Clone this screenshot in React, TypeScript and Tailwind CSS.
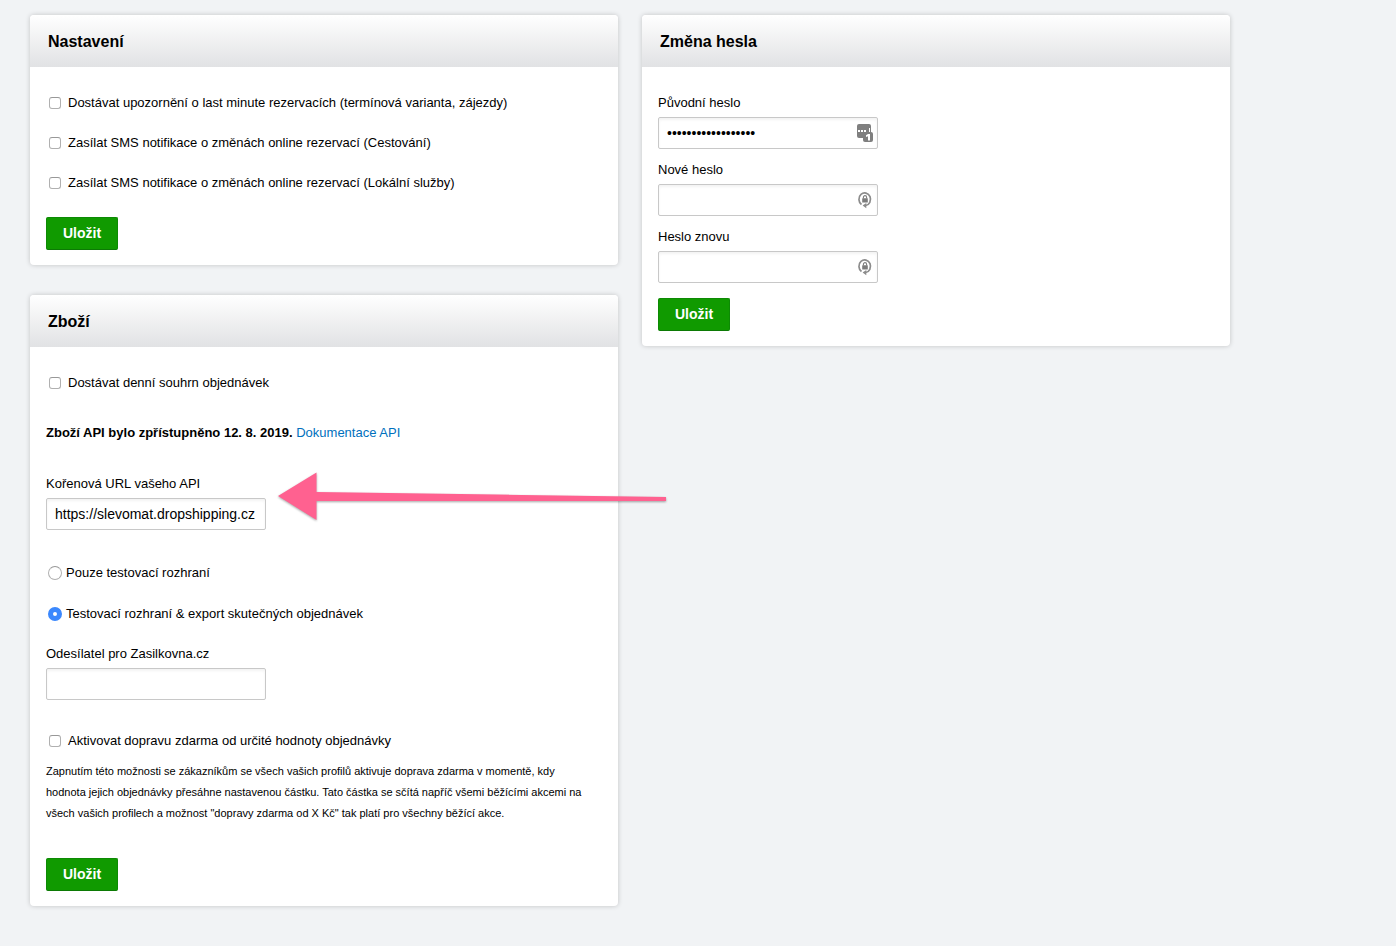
import { useId, type ReactNode } from 'react';

function Card({ title, children }: { title: string; children: ReactNode }) {
  return (
    <section className="rounded-sm bg-white shadow-[0_0_5px_rgba(0,0,0,0.2)]">
      <h2 className="rounded-t-sm bg-linear-to-b from-white to-[#e1e2e4] px-[18px] pt-[15px] pb-[13px] text-[16px] leading-6 font-bold">
        {title}
      </h2>
      <form className="px-4 pt-[26px] pb-[15px]" onSubmit={(e) => e.preventDefault()}>
        {children}
      </form>
    </section>
  );
}

function Checkbox({ label }: { label: string }) {
  return (
    <label className="flex items-center gap-[7px] pl-[3px]">
      <input
        type="checkbox"
        className="size-3 shrink-0 appearance-none rounded-[3px] border border-[#b0b0b0] border-t-[#989898] bg-white checked:border-[#3b8afd] checked:bg-[#3b8afd]"
      />
      <span>{label}</span>
    </label>
  );
}

function Radio({ label, defaultChecked }: { label: string; defaultChecked?: boolean }) {
  return (
    <label className="flex items-center gap-1 pl-[2px]">
      <input
        type="radio"
        name="api-mode"
        defaultChecked={defaultChecked}
        className="size-[14px] shrink-0 appearance-none rounded-full border border-[#b0b0b0] border-t-[#989898] bg-white checked:border-5 checked:border-[#3b88fd]"
      />
      <span>{label}</span>
    </label>
  );
}

type FieldProps = {
  label: string;
  type?: string;
  defaultValue?: string;
  icon?: ReactNode;
};

function Field({ label, type = 'text', defaultValue, icon }: FieldProps) {
  const id = useId();
  return (
    <div className="flex flex-col items-start gap-1">
      <label htmlFor={id}>{label}</label>
      <div className="relative w-[220px] max-w-full">
        <input
          id={id}
          type={type}
          defaultValue={defaultValue}
          className="block h-8 w-full rounded-[2px] border border-[#c8c8c8] bg-white px-2 text-[14px] shadow-[inset_0_2px_3px_rgba(0,0,0,0.05)] outline-none"
        />
        {icon && <span className="pointer-events-none absolute top-[6px] right-1">{icon}</span>}
      </div>
    </div>
  );
}

function SaveButton() {
  return (
    <button
      type="submit"
      className="block h-[33px] w-[72px] rounded-[2px] border border-[#0d8a04] border-b-[#0c7a05] bg-[#109a00] pb-[2px] text-center text-[14px] font-bold text-white"
    >
      Uložit
    </button>
  );
}

function SavedPasswordIcon() {
  return (
    <svg width="18" height="20" viewBox="0 0 18 20" aria-hidden="true">
      <rect x="1" y="1" width="14" height="14" rx="2" fill="#7f7f7f" />
      <g fill="#fff">
        <rect x="2" y="7" width="2" height="2" />
        <rect x="5" y="7" width="2" height="2" />
        <rect x="8" y="7" width="2" height="2" />
        <rect x="13" y="5" width="1" height="4" />
      </g>
      <rect x="7" y="9" width="10" height="10" rx="2" fill="#7f7f7f" />
      <path d="M10 12.300 12 11h2v6.500h-2v-4.300l-2 .7z" fill="#fff" />
    </svg>
  );
}

function GeneratePasswordIcon() {
  return (
    <svg width="18" height="20" viewBox="0 0 18 20" fill="none" aria-hidden="true">
      <path d="M5.500 14.500A5.800 6.300 0 1 1 9.600 15.500" stroke="#8c8c8c" strokeWidth="1.700" />
      <path d="M10.300 13v5.200L6.600 15.600z" fill="#8c8c8c" />
      <rect x="6.200" y="8.200" width="5.600" height="4.300" rx=".5" fill="#7c7c7c" />
      <path d="M7.400 8.400V7.200a1.600 1.600 0 0 1 3.200 0v1.200" stroke="#7c7c7c" strokeWidth="1.100" />
    </svg>
  );
}

function PointerArrow() {
  return (
    <svg
      width="396"
      height="58"
      viewBox="0 0 396 58"
      aria-hidden="true"
      className="pointer-events-none absolute -top-[6px] left-[228px] z-10 drop-shadow-[0_1px_1px_rgba(0,0,0,0.35)]"
    >
      <path d="M4 28 42.500 4.500V24L392 29v4H42.500V52z" fill="#ff6190" />
    </svg>
  );
}

export default function App() {
  return (
    <main className="min-h-screen bg-[#f1f3f5] px-[30px] pt-[15px] pb-10 font-['Liberation_Sans',Arial,sans-serif] text-[13px] leading-5 text-black">
      <div className="grid max-w-[1200px] grid-cols-2 items-start gap-6">
        <div className="flex flex-col gap-[30px]">
          <Card title="Nastavení">
            <div className="mb-6 flex flex-col gap-5">
              <Checkbox label="Dostávat upozornění o last minute rezervacích (termínová varianta, zájezdy)" />
              <Checkbox label="Zasílat SMS notifikace o změnách online rezervací (Cestování)" />
              <Checkbox label="Zasílat SMS notifikace o změnách online rezervací (Lokální služby)" />
            </div>
            <SaveButton />
          </Card>

          <Card title="Zboží">
            <Checkbox label="Dostávat denní souhrn objednávek" />
            <p className="mt-[30px]">
              <strong>Zboží API bylo zpřístupněno 12. 8. 2019.</strong>{' '}
              <a href="#api" className="text-[#0070bd]">
                Dokumentace API
              </a>
            </p>
            <div className="relative mt-[31px]">
              <Field label="Kořenová URL vašeho API" defaultValue="https://slevomat.dropshipping.cz" />
              <PointerArrow />
            </div>
            <div className="mt-[33px] mb-5 flex flex-col gap-[21px]">
              <Radio label="Pouze testovací rozhraní" />
              <Radio label="Testovací rozhraní & export skutečných objednávek" defaultChecked />
            </div>
            <Field label="Odesílatel pro Zasilkovna.cz" />
            <div className="mt-[31px]">
              <Checkbox label="Aktivovat dopravu zdarma od určité hodnoty objednávky" />
            </div>
            <p className="mt-[10px] mb-[34px] pr-3 text-[11px] leading-[21px]">
              Zapnutím této možnosti se zákazníkům se všech vašich profilů aktivuje doprava zdarma v momentě, kdy
              hodnota jejich objednávky přesáhne nastavenou částku. Tato částka se sčítá napříč všemi běžícími akcemi
              na všech vašich profilech a možnost "dopravy zdarma od X Kč" tak platí pro všechny běžící akce.
            </p>
            <SaveButton />
          </Card>
        </div>

        <Card title="Změna hesla">
          <div className="mb-[15px] flex flex-col gap-[11px]">
            <Field
              label="Původní heslo"
              type="password"
              defaultValue="heslo-k-uctu-12345"
              icon={<SavedPasswordIcon />}
            />
            <Field label="Nové heslo" type="password" icon={<GeneratePasswordIcon />} />
            <Field label="Heslo znovu" type="password" icon={<GeneratePasswordIcon />} />
          </div>
          <SaveButton />
        </Card>
      </div>
    </main>
  );
}
